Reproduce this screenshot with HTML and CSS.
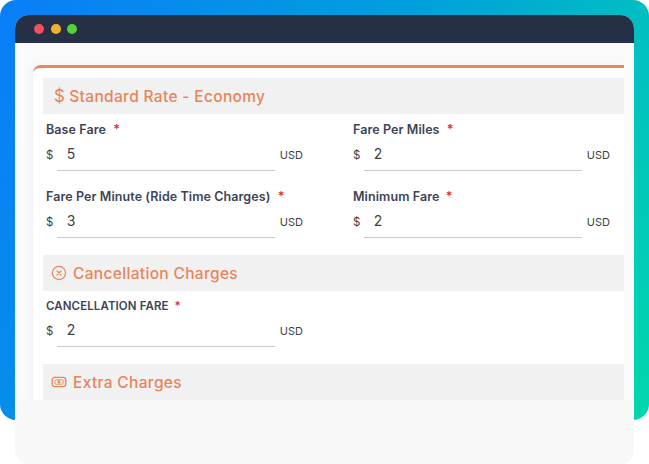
FILE: index.html
```html
<!DOCTYPE html>
<html lang="en">
<head>
<meta charset="utf-8">
<title>Standard Rate</title>
<link rel="stylesheet" href="styles.css">
</head>
<body>
<div class="stage">
  <div class="window">
    <div class="titlebar">
      <span class="dot dot-red"></span>
      <span class="dot dot-yellow"></span>
      <span class="dot dot-green"></span>
    </div>
    <div class="viewport">
      <div class="card">
        <h2 class="section-head"><span class="dollar">$</span>Standard Rate - Economy</h2>
        <div class="fields">
          <div class="field">
            <label class="field-label">Base Fare <span class="req req-wide">*</span></label>
            <div class="input-row"><span class="prefix">$</span><span class="input">5</span><span class="unit">USD</span></div>
          </div>
          <div class="field">
            <label class="field-label">Fare Per Miles <span class="req req-wide">*</span></label>
            <div class="input-row"><span class="prefix">$</span><span class="input">2</span><span class="unit">USD</span></div>
          </div>
          <div class="field">
            <label class="field-label">Fare Per Minute (Ride Time Charges) <span class="req req-wide">*</span></label>
            <div class="input-row"><span class="prefix">$</span><span class="input">3</span><span class="unit">USD</span></div>
          </div>
          <div class="field">
            <label class="field-label">Minimum Fare <span class="req">*</span></label>
            <div class="input-row"><span class="prefix">$</span><span class="input">2</span><span class="unit">USD</span></div>
          </div>
        </div>
        <h2 class="section-head section-head-icon">
          <svg class="icon" viewBox="0 0 16 16" width="16" height="16" fill="none" stroke="#e8845a" stroke-width="1.2" stroke-linecap="round"><circle cx="8" cy="8" r="6.6"/><path d="M6 6l4 4M10 6l-4 4"/></svg>
          Cancellation Charges</h2>
        <div class="fields fields-single">
          <div class="field">
            <label class="field-label field-label-caps">CANCELLATION FARE <span class="req">*</span></label>
            <div class="input-row"><span class="prefix">$</span><span class="input">2</span><span class="unit">USD</span></div>
          </div>
        </div>
        <h2 class="section-head section-head-icon">
          <svg class="icon" viewBox="0 0 16 16" width="16" height="16" fill="none" stroke="#e8845a" stroke-width="1.3"><rect x="1.2" y="3.4" width="13.6" height="9.2" rx="2.6"/><rect x="4" y="5.8" width="8" height="4.4" rx="1" stroke-width="0.9"/><circle cx="8" cy="8" r="0.8"/></svg>
          Extra Charges</h2>
      </div>
    </div>
    <div class="footer"></div>
  </div>
</div>
</body>
</html>
```

FILE: styles.css
```css
* { box-sizing: border-box; }
html, body { margin: 0; padding: 0; background: #fff; }
body { width: 649px; height: 464px; overflow: hidden; font-family: Inter, "Noto Sans", sans-serif; }
.stage {
  height: 420px;
  padding: 15px 15px 0;
  border-radius: 16px;
  background: linear-gradient(115deg, #0a7df8 0%, #00a0dc 50%, #00d8ac 100%);
}
.window {
  width: 619px;
  height: 449px;
  border-radius: 14px;
  background: #fafafa;
  display: flex;
  flex-direction: column;
  overflow: hidden;
}
.titlebar {
  height: 28px;
  flex: none;
  padding-left: 19px;
  display: flex;
  align-items: center;
  gap: 6.5px;
  background: #252f45;
}
.dot { width: 10px; height: 10px; border-radius: 50%; }
.dot-red { background: #f4505c; }
.dot-yellow { background: #eeb32b; }
.dot-green { background: #56cf38; }
.viewport {
  height: 357px;
  flex: none;
  overflow: hidden;
  padding: 22px 10px 0 18px;
  background: #fafafa;
}
.card {
  height: 400px;
  padding: 10px 0 0 10px;
  background: #fff;
  border-top: 3px solid #e08a62;
  border-top-left-radius: 8px;
  box-shadow: -3px 0 6px rgba(0, 0, 0, 0.04);
}
.footer { flex: 1; background: #f8f8f8; }
.section-head {
  margin: 0;
  height: 36px;
  display: flex;
  align-items: center;
  padding-left: 12px;
  background: #f1f1f1;
  color: #e8845a;
  font-size: 15.5px;
  font-weight: 450;
  letter-spacing: 0.33px;
  white-space: nowrap;
}
.section-head-icon { padding-left: 8px; gap: 6px; }
.dollar { margin-left: -1px; margin-right: 4px; font-size: 17px; font-weight: 400; }
.icon { flex: none; }
.fields {
  display: grid;
  grid-template-columns: 307px 1fr;
  row-gap: 18px;
  padding: 8px 0 17px 3px;
}
.fields-single { padding-top: 7px; }
.field { height: 49px; }
.field-label {
  display: block;
  height: 16px;
  line-height: 16px;
  font-size: 12.5px;
  font-weight: 600;
  letter-spacing: 0.09px;
  color: #3d4356;
  white-space: nowrap;
}
.field-label-caps { font-size: 11.5px; letter-spacing: 0.1px; }
.req { color: #e8263c; margin-left: 3px; }
.req-wide { margin-left: 4px; }
.input-row {
  display: flex;
  height: 31px;
  margin-top: 2px;
  width: 257px;
  font-size: 11.5px;
  color: #3f3f3f;
}
.prefix { width: 11px; line-height: 30px; }
.input {
  width: 218px;
  flex: none;
  padding-left: 10px;
  border-bottom: 1px solid #c9c9cc;
  font-size: 14px;
  line-height: 28px;
}
.unit { margin-left: 5px; font-size: 11px; line-height: 30px; }
```
